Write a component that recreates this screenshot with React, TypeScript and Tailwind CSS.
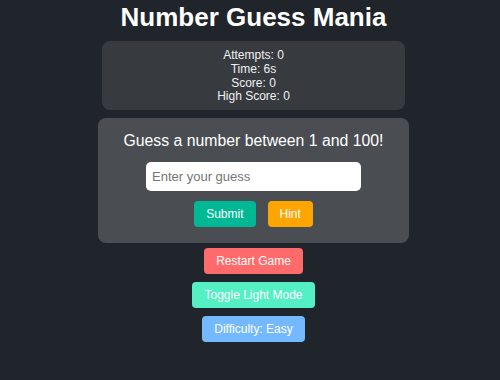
import React from "react";

export default function App() {
  return (
    <div
      className="min-h-[380px] w-full bg-[#1f252b] flex flex-col items-center pl-[7px] pt-[2px] text-white"
      style={{ fontFamily: '"Liberation Sans", Arial, sans-serif' }}
    >
      <h1 className="text-[26px] font-bold leading-[30px]">Number Guess Mania</h1>
      <div className="mt-[9px] w-[303px] rounded-[8px] bg-[#373b40] pt-[8px] pb-[6px] text-center text-[12px] leading-[13.8px] text-[#f0f0f0]">
        <div>Attempts: 0</div>
        <div>Time: 6s</div>
        <div>Score: 0</div>
        <div>High Score: 0</div>
      </div>
      <div className="mt-[8px] w-[311px] rounded-[8px] bg-[#4a4e53] pt-[14px] pb-[16px] flex flex-col items-center">
        <div className="text-[15.8px] leading-[18px]">Guess a number between 1 and 100!</div>
        <input
          className="mt-[12px] h-[29px] w-[215px] rounded-[5px] bg-white px-[6px] text-[13px] text-black placeholder:text-[#757575] outline-none"
          placeholder="Enter your guess"
        />
        <div className="mt-[10px] flex gap-[12px]">
          <button className="h-[26px] rounded-[4px] bg-[#00b894] px-[12px] text-[12px] text-white">Submit</button>
          <button className="h-[26px] rounded-[4px] bg-[#ffa502] px-[12px] text-[12px] text-white">Hint</button>
        </div>
      </div>
      <button className="mt-[5px] h-[26px] rounded-[4px] bg-[#ff6b6b] px-[12px] text-[12px] text-white">Restart Game</button>
      <button className="mt-[8px] h-[26px] rounded-[4px] bg-[#55efc4] px-[12px] text-[12px] text-white">Toggle Light Mode</button>
      <button className="mt-[8px] h-[26px] rounded-[4px] bg-[#74b9ff] px-[12px] text-[12px] text-white">Difficulty: Easy</button>
    </div>
  );
}
